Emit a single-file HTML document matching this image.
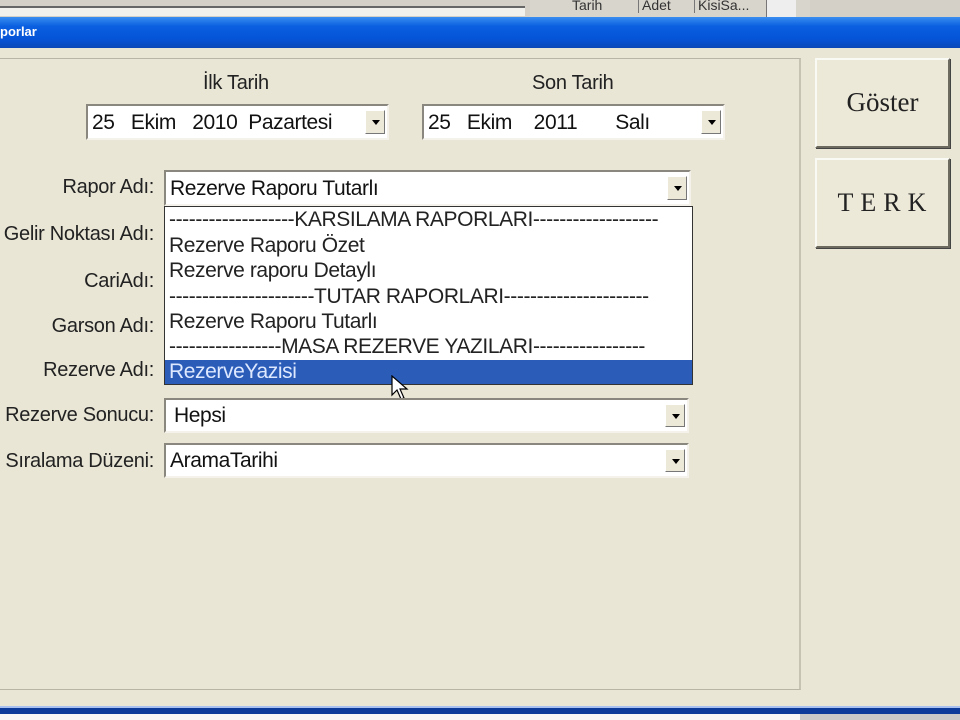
<!DOCTYPE html>
<html><head><meta charset="utf-8"><style>
*{box-sizing:border-box;margin:0;padding:0}
body{width:960px;height:720px;overflow:hidden;background:#e9e6d6;font-family:"Liberation Sans",sans-serif;position:relative;color:#222}
.a{position:absolute}
.lbl{position:absolute;font-size:20px;letter-spacing:-0.3px;text-align:right;white-space:nowrap}
.combo{position:absolute;background:#fff;border:2px solid;border-color:#8a887e #f4f2ea #f4f2ea #8a887e;font-size:21px;letter-spacing:-0.4px;padding-left:4px;white-space:nowrap;color:#111}
.arr{position:absolute;right:2px;top:4px;bottom:4px;width:20px;background:#ece9d8;border:1px solid;border-color:#fff #777 #777 #fff}
.arr:after{content:"";position:absolute;left:6px;top:50%;margin-top:-2px;border:4px solid transparent;border-top:5px solid #000}
.btn{position:absolute;background:#ece9d8;border:2px solid;border-color:#fafaf4 #6d6b60 #6d6b60 #fafaf4;box-shadow:1px 1px 0 #444;font-family:"Liberation Serif",serif;text-align:center;color:#222}
.li{position:absolute;left:4px;font-size:21px;letter-spacing:-0.4px;white-space:nowrap}
</style></head><body>
<div class="a" style="left:0;top:0;width:960px;height:18px;background:#d4d0c8"></div>
<div class="a" style="left:0;top:6px;width:525px;height:10px;background:#f2f1ec;border-top:2px solid #666"></div>
<div class="a" style="left:530px;top:0;width:280px;height:18px;background:#d8d5cc;font-size:14px;color:#333">
<span class="a" style="left:42px;top:-3px">Tarih</span><span class="a" style="left:108px;top:-3px;border-left:1px solid #777;padding-left:3px">Adet</span><span class="a" style="left:164px;top:-3px;border-left:1px solid #777;padding-left:3px">KisiSa...</span><span class="a" style="left:236px;top:0;width:30px;height:18px;background:#eee;border-left:1px solid #777"></span></div>
<div class="a" style="left:0;top:17px;width:960px;height:31px;background:linear-gradient(#3a8ef0,#0a5fe0 30%,#0554d8 70%,#0a48b8);"></div>
<div class="a" style="left:0;top:24px;font-size:13px;font-weight:bold;color:#fff">porlar</div>
<div class="a" style="left:-4px;top:58px;width:805px;height:632px;border:1px solid;border-color:#b8b5a6 #c8c5b6 #b8b5a6 #b8b5a6;border-right:2px solid #c6c3b2"></div>
<div class="lbl" style="left:203px;top:72px">İlk Tarih</div>
<div class="lbl" style="left:532px;top:72px">Son Tarih</div>
<div class="combo" style="left:86px;top:104px;width:303px;height:36px;line-height:33px">25&nbsp;&nbsp;&nbsp;Ekim&nbsp;&nbsp;&nbsp;2010&nbsp; Pazartesi<div class="arr"></div></div>
<div class="combo" style="left:422px;top:104px;width:303px;height:36px;line-height:33px">25&nbsp;&nbsp;&nbsp;Ekim&nbsp;&nbsp;&nbsp;&nbsp;2011&nbsp;&nbsp;&nbsp;&nbsp;&nbsp;&nbsp;&nbsp;Salı<div class="arr"></div></div>
<div class="lbl" style="right:806px;top:176px">Rapor Adı:</div>
<div class="lbl" style="right:806px;top:223px">Gelir Noktası Adı:</div>
<div class="lbl" style="right:806px;top:270px">CariAdı:</div>
<div class="lbl" style="right:806px;top:315px">Garson Adı:</div>
<div class="lbl" style="right:806px;top:359px">Rezerve Adı:</div>
<div class="lbl" style="right:806px;top:404px">Rezerve Sonucu:</div>
<div class="lbl" style="right:806px;top:450px">Sıralama Düzeni:</div>
<div class="combo" style="left:164px;top:170px;width:527px;height:36px;line-height:33px">Rezerve Raporu Tutarlı<div class="arr"></div></div>
<div class="a" style="left:164px;top:206px;width:529px;height:179px;background:#fff;border:1px solid #333">
<div class="li" style="top:1px">-------------------KARSILAMA RAPORLARI-------------------</div>
<div class="li" style="top:27px">Rezerve Raporu Özet</div>
<div class="li" style="top:52px">Rezerve raporu Detaylı</div>
<div class="li" style="top:78px">----------------------TUTAR RAPORLARI----------------------</div>
<div class="li" style="top:103px">Rezerve Raporu Tutarlı</div>
<div class="li" style="top:128px">-----------------MASA REZERVE YAZILARI-----------------</div>
<div class="a" style="left:0;top:153px;width:527px;height:24px;background:#2a5cb8"></div>
<div class="li" style="top:153px;color:#dde8ff">RezerveYazisi</div>
</div>
<svg class="a" style="left:391px;top:375px" width="20" height="30" viewBox="0 0 20 30"><path d="M1 1 L1 20 L6 15 L10 24 L13 23 L9 14 L16 14 Z" fill="#fff" stroke="#000" stroke-width="1.2"/></svg>
<div class="combo" style="left:164px;top:398px;width:525px;height:35px;line-height:31px;padding-left:8px">Hepsi<div class="arr"></div></div>
<div class="combo" style="left:164px;top:443px;width:525px;height:35px;line-height:31px">AramaTarihi<div class="arr"></div></div>
<div class="btn" style="left:815px;top:58px;width:135px;height:90px;line-height:84px;font-size:27px">Göster</div>
<div class="btn" style="left:815px;top:158px;width:135px;height:90px;line-height:86px;font-size:26px;letter-spacing:7px;padding-left:6px">TERK</div>
<div class="a" style="left:0;top:706px;width:960px;height:2px;background:#a8c0f0"></div>
<div class="a" style="left:0;top:708px;width:960px;height:6px;background:#0c3a9a"></div>
<div class="a" style="left:0;top:714px;width:960px;height:6px;background:#f6f6f6"></div>
<div class="a" style="left:800px;top:714px;width:160px;height:6px;background:#c8c8c8"></div>
</body></html>
